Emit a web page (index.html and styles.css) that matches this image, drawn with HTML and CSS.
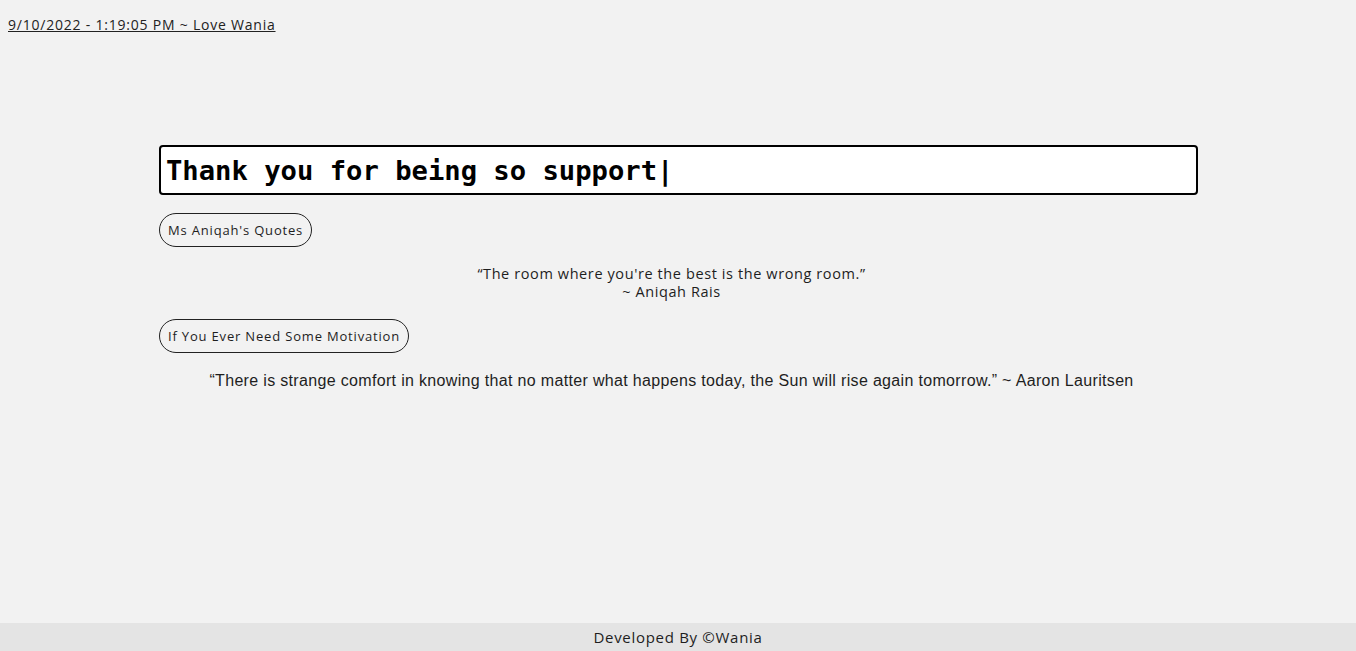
FILE: index.html
```html
<!DOCTYPE html>
<html>
<head>
<meta charset="utf-8">
<link rel="stylesheet" href="styles.css">
</head>
<body>
<header class="top"><a class="stamp" href="#">9/10/2022 - 1:19:05 PM ~ Love Wania</a></header>
<main class="wrap">
  <div class="typer">Thank you for being so support|</div>
  <button class="pill">Ms Aniqah's Quotes</button>
  <p class="quote">“The room where you're the best is the wrong room.”<br>~ Aniqah Rais</p>
  <button class="pill">If You Ever Need Some Motivation</button>
  <p class="quote narrow">“There is strange comfort in knowing that no matter what happens today, the Sun will rise again tomorrow.” ~ Aaron Lauritsen</p>
</main>
<footer class="foot">Developed By ©Wania</footer>
</body>
</html>
```
FILE: styles.css
```css
html, body { margin: 0; padding: 0; }
body {
  background: #f2f2f2;
  font-family: "Open Sans", sans-serif;
  color: #1e1e1e;
  height: 651px;
  display: flex;
  flex-direction: column;
}
.top { padding: 13px 8px 0; height: 32px; }
.stamp { color: #222; font-size: 14px; letter-spacing: 0.78px; text-decoration: underline; }
.wrap {
  flex: 1;
  box-sizing: border-box;
  width: 1040px;
  margin: 0 auto;
  padding: 100px 0 0 1px;
  display: flex;
  flex-direction: column;
  align-items: flex-start;
}
.typer {
  box-sizing: border-box;
  width: 1039px;
  height: 50px;
  background: #fff;
  border: 2px solid #000;
  border-radius: 4px;
  font-family: "DejaVu Sans Mono", monospace;
  font-weight: bold;
  font-size: 27.2px;
  line-height: 48px;
  padding-left: 5px;
  color: #000;
}
.pill {
  margin-top: 18px;
  background: transparent;
  border: 1px solid #222;
  border-radius: 17px;
  height: 34px;
  padding: 0 8px;
  font-family: "Open Sans", sans-serif;
  font-size: 13px;
  letter-spacing: 0.82px;
  color: #1e1e1e;
}
.quote {
  align-self: stretch;
  margin: 18px 14px 0 0;
  text-align: center;
  font-size: 14.5px;
  letter-spacing: 0.6px;
  line-height: 18px;
}
.narrow {
  font-family: "Liberation Sans", sans-serif;
  font-size: 16px;
  letter-spacing: 0.33px;
  margin-top: 19px;
}
.foot {
  height: 28px;
  background: #e4e4e4;
  text-align: center;
  font-size: 15px;
  letter-spacing: 0.7px;
  line-height: 28px;
}
```
